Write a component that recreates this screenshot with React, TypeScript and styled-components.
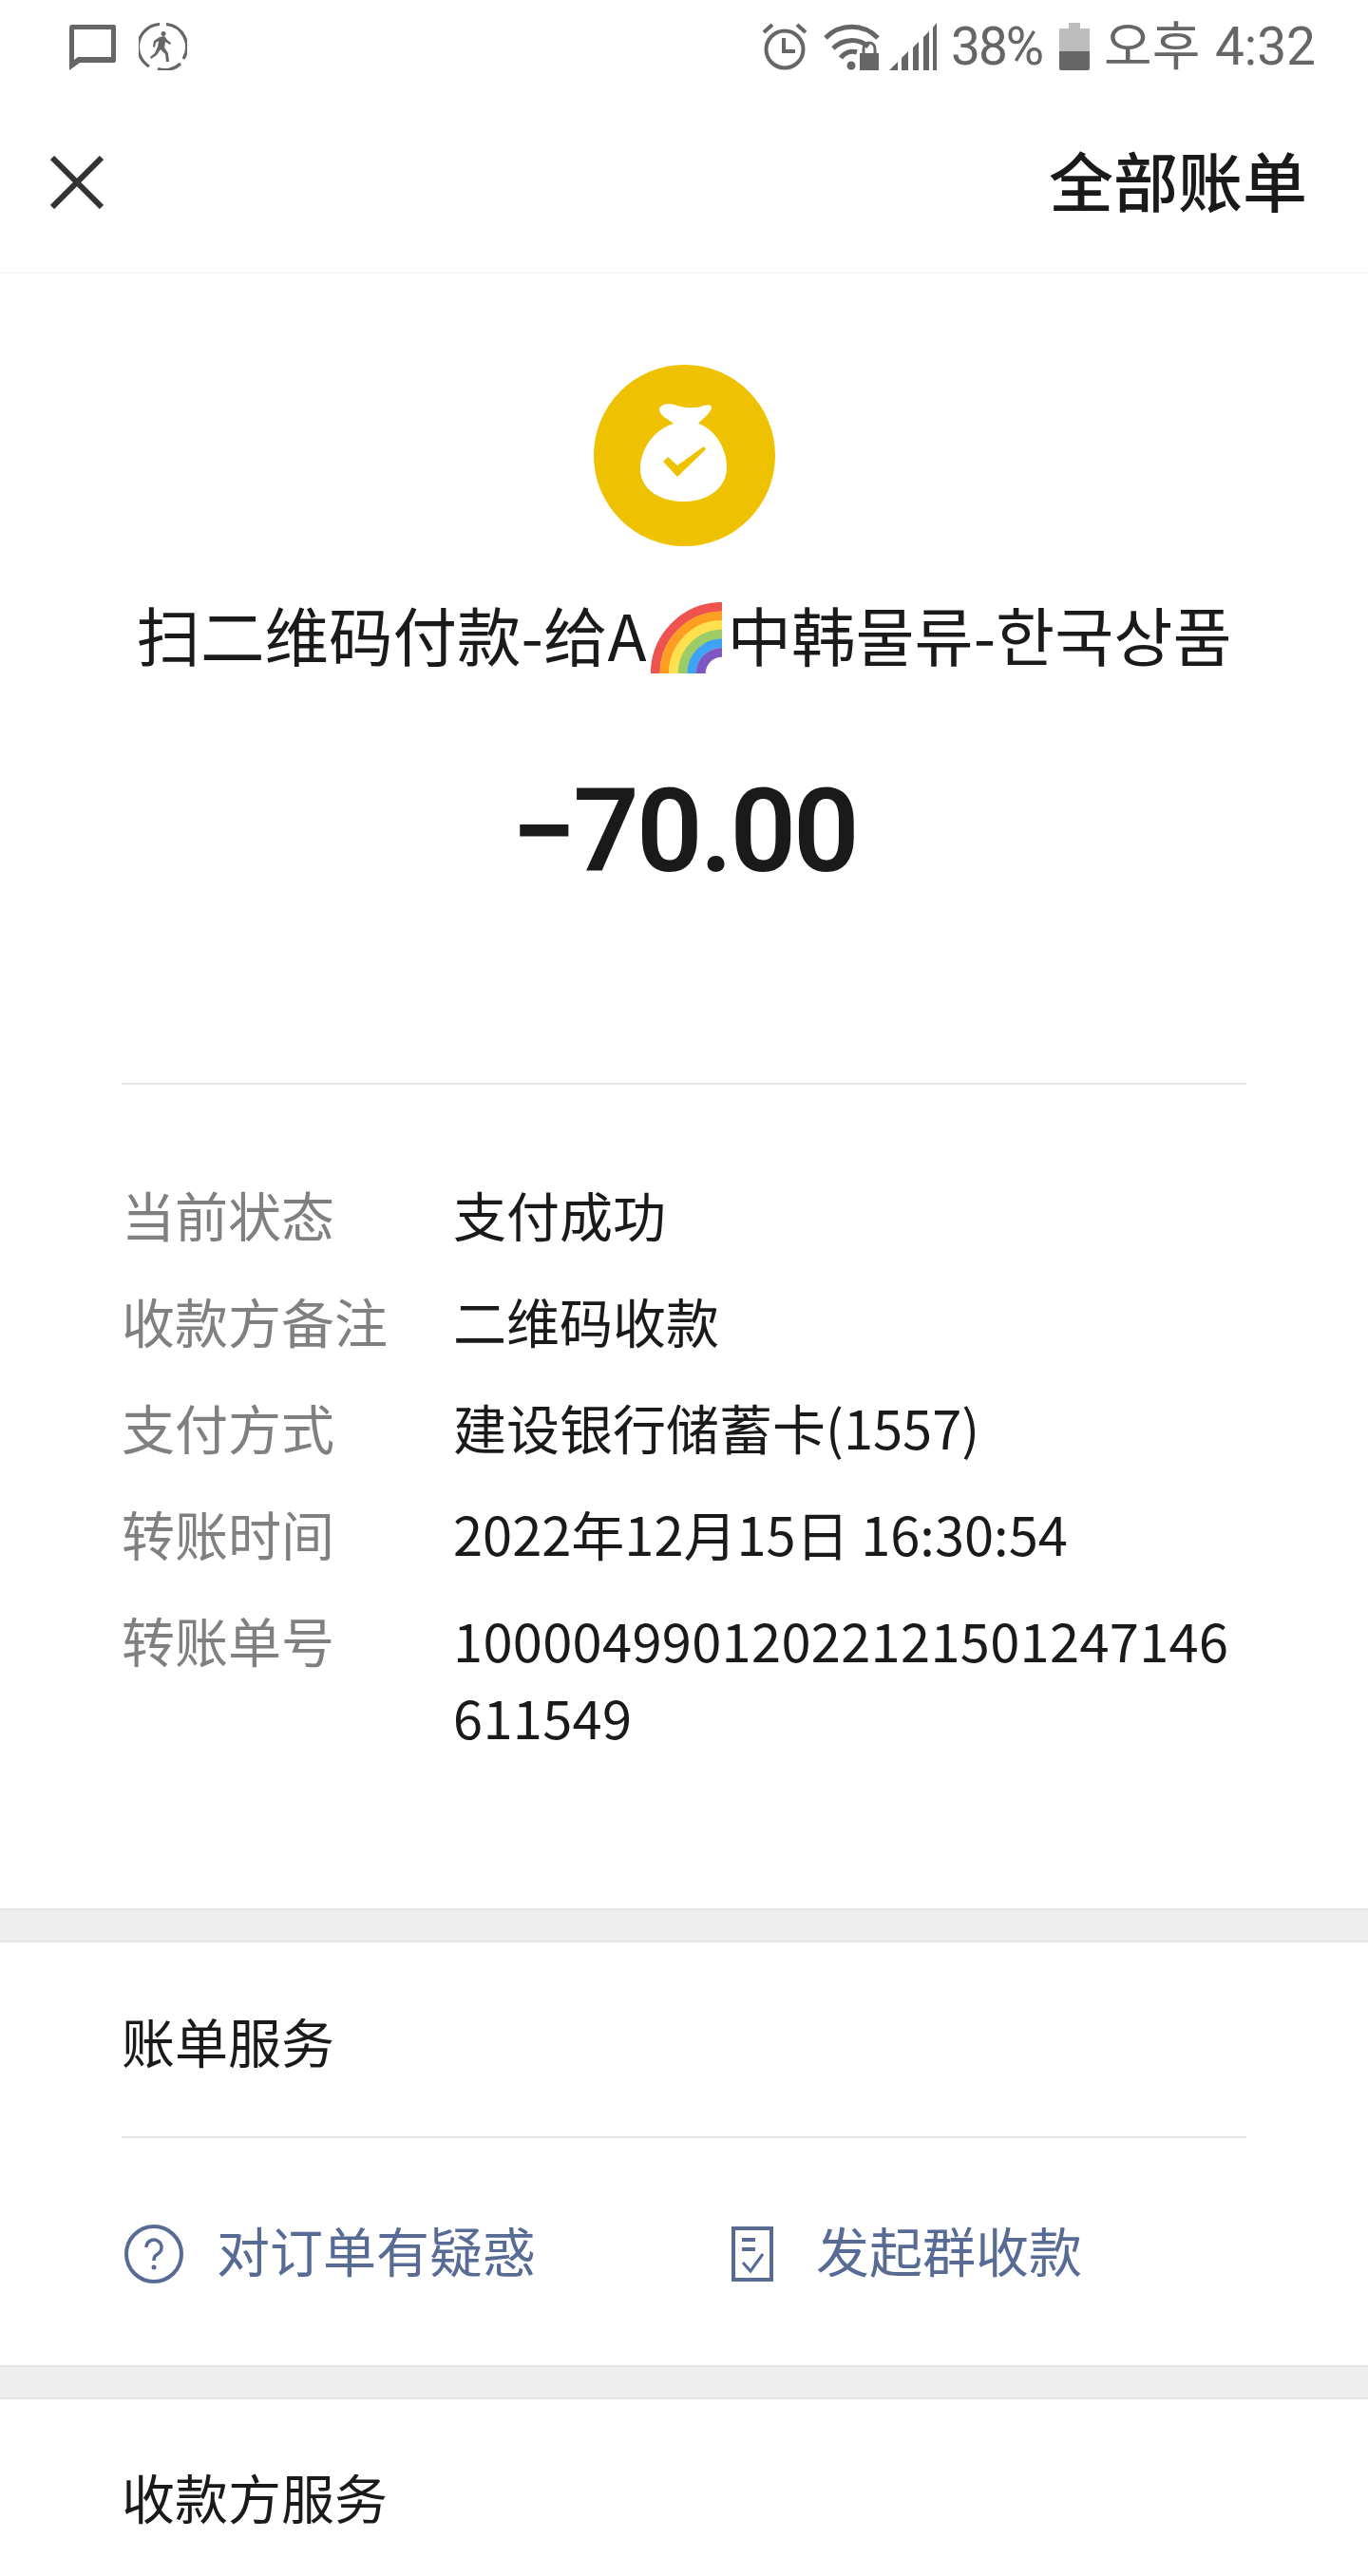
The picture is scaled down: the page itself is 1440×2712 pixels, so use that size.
import styled, { createGlobalStyle } from "styled-components"

const FONT_STACK = `"Noto Sans CJK SC", "Noto Sans CJK KR", Roboto, sans-serif`

const GlobalStyle = createGlobalStyle`
  html, body {
    margin: 0;
    padding: 0;
    background: #fff;
  }
  body {
    font-family: ${FONT_STACK};
  }
`

const Page = styled.div`
  width: 1440px;
  height: 2712px;
  overflow: hidden;
  background: #fff;
`

const StatusBar = styled.div`
  height: 98px;
  padding: 0 55px 0 73px;
  display: flex;
  align-items: center;
  justify-content: space-between;
  color: #666;
`

const StatusGroup = styled.div`
  display: flex;
  align-items: center;
`

const StatusIcon = styled.svg<{ $gap?: number }>`
  display: block;
  margin-left: ${props => props.$gap ?? 0}px;
`

const StatusText = styled.span<{ $gap?: number }>`
  margin-left: ${props => props.$gap ?? 0}px;
  font-family: Roboto, "Noto Sans CJK KR", sans-serif;
  font-size: 55px;
  line-height: 60px;
  letter-spacing: -2px;
  white-space: nowrap;
`

const ClockText = styled(StatusText)`
  letter-spacing: 0;
  word-spacing: 2px;
`

const NavBar = styled.div`
  height: 190px;
  padding: 0 64px 6px 53px;
  box-sizing: border-box;
  border-bottom: 2px solid #f6f6f6;
  display: flex;
  align-items: center;
  justify-content: space-between;
`

const NavTitle = styled.div`
  font-size: 68px;
  line-height: 80px;
  font-weight: 500;
  color: #1a1a1a;
`

const CloseIcon = styled.svg`
  margin-top: 6px;
`

const Hero = styled.div`
  padding-top: 96px;
  display: flex;
  flex-direction: column;
  align-items: center;
`

const PayTitle = styled.div`
  margin-top: 42px;
  display: flex;
  align-items: center;
  height: 100px;
  font-size: 67.5px;
  line-height: 100px;
  color: #1a1a1a;
  white-space: nowrap;
`

const RainbowIcon = styled.svg`
  margin: 8px 5px 0 5px;
`

const Amount = styled.div`
  margin-top: 89px;
  font-family: Roboto, sans-serif;
  font-size: 122px;
  line-height: 140px;
  font-weight: 600;
  letter-spacing: -3px;
  color: #1a1a1a;
`

const Inset = styled.div`
  margin: 0 128px;
`

const Rule = styled.div`
  height: 2px;
  background: #e5e5e5;
`

const HeroRule = styled(Rule)`
  margin-top: 194px;
`

const DetailList = styled.div`
  padding: 95px 0 162px;
  display: flex;
  flex-direction: column;
  gap: 31px;
`

const DetailRow = styled.div`
  display: flex;
  font-size: 56px;
  line-height: 81px;
`

const DetailLabel = styled.div`
  width: 349px;
  flex-shrink: 0;
  color: #808080;
`

const DetailValue = styled.div<{ $spacing?: number }>`
  flex: 1;
  min-width: 0;
  color: #1a1a1a;
  word-break: break-all;
  letter-spacing: ${props => props.$spacing ?? 0}px;
`

const SectionBand = styled.div`
  height: 36px;
  box-sizing: border-box;
  background: #eeeeee;
  border-top: 2px solid #e5e5e5;
  border-bottom: 2px solid #e5e5e5;
`

const SectionTitle = styled.div`
  height: 204px;
  display: flex;
  align-items: center;
  font-size: 56px;
  color: #1a1a1a;
`

const LinkRow = styled.div`
  height: 239px;
  padding-bottom: 6px;
  box-sizing: border-box;
  display: flex;
  align-items: center;
`

const ServiceLink = styled.div<{ $width: number }>`
  width: ${props => props.$width}px;
  display: flex;
  align-items: center;
  font-size: 56px;
  line-height: 80px;
  color: #576b95;
`

const LinkIconSlot = styled.div<{ $width: number }>`
  width: ${props => props.$width}px;
  flex-shrink: 0;
  padding: 10px 0 0 3px;
  box-sizing: border-box;
  display: flex;
  align-items: center;
`

const LastTitle = styled(SectionTitle)`
  height: 203px;
`

const details: { label: string; value: string; spacing?: number }[] = [
  { label: "当前状态", value: "支付成功" },
  { label: "收款方备注", value: "二维码收款" },
  { label: "支付方式", value: "建设银行储蓄卡(1557)" },
  { label: "转账时间", value: "2022年12月15日 16:30:54" },
  { label: "转账单号", value: "10000499012022121501247146611549", spacing: 0.32 },
]

const rainbowBands = ["#ef5350", "#ff9f22", "#ffe04f", "#9ccc65", "#3ea2f5", "#7e57c2"]

const Rainbow = () => (
  <RainbowIcon width={75} height={75} viewBox="0 0 75 75">
    {rainbowBands.map((color, i) => {
      const r = 70.2 - i * 9.6
      return (
        <path
          key={color}
          d={`M${75 - r} 75A${r} ${r} 0 0 1 75 ${75 - r}`}
          fill="none"
          stroke={color}
          strokeWidth={9.8}
        />
      )
    })}
  </RainbowIcon>
)

export default function App() {
  return (
    <Page>
      <GlobalStyle />
      <StatusBar>
        <StatusGroup>
          <StatusIcon width={50} height={50} viewBox="0 0 50 50">
            <path d="M3 2h44a2 2 0 0 1 2 2v36a2 2 0 0 1-2 2H11L0 50V5a3 3 0 0 1 3-3z M5 7v32l4-3h35V7z" fill="#666" fillRule="evenodd" />
          </StatusIcon>
          <StatusIcon $gap={23} width={51} height={50} viewBox="0 0 51 50">
            <path d="M22 1.500A24 24 0 0 0 11 46 M20 48.500A24 24 0 0 0 44 43 M47 38A24 24 0 0 0 29 1.500" fill="none" stroke="#666" strokeWidth={3.2} />
            <circle cx="26" cy="11.500" r="2.500" fill="#666" />
            <path d="M22 15l5-1 3 4 4 3-1 2-5-3-1 6 4 6 1 9h-3l-1-8-5-5-4 6-6 4-1-2 5-4 3-7 1-6-3 2-1 5-2-1 1-6z" fill="#666" />
          </StatusIcon>
        </StatusGroup>
        <StatusGroup>
          <StatusIcon width={46} height={50} viewBox="0 0 46 50">
            <circle cx="23" cy="28" r="19.500" fill="none" stroke="#666" strokeWidth={4} />
            <path d="M22 16v14h12" fill="none" stroke="#666" strokeWidth={4} />
            <path d="M1 10L10 2M45 10L36 2" fill="none" stroke="#666" strokeWidth={4} />
          </StatusIcon>
          <StatusIcon $gap={18} width={59} height={50} viewBox="0 0 59 50">
            <path d="M2 16A38 38 0 0 1 57 16" fill="none" stroke="#666" strokeWidth={5} />
            <path d="M10 27A27 27 0 0 1 47 25" fill="none" stroke="#666" strokeWidth={5} />
            <path d="M18 37A15 15 0 0 1 35 31" fill="none" stroke="#666" strokeWidth={5} />
            <circle cx="29" cy="45" r="4.500" fill="#666" />
            <rect x="38" y="32" width="20" height="18" fill="#666" />
            <path d="M42 33v-6a6 6 0 0 1 12 0v6" fill="none" stroke="#666" strokeWidth={3} />
          </StatusIcon>
          <StatusIcon $gap={10} width={50} height={50} viewBox="0 0 50 50">
            <path d="M0 50L9 41V50z M13 37L20 30V50H13z M25 26L31 20V50H25z M36 15L42 9V50H36z M46 5L50 0V50H46z" fill="#666" />
          </StatusIcon>
          <StatusText $gap={15}>38%</StatusText>
          <StatusIcon $gap={18} width={32} height={50} viewBox="0 0 32 50">
            <path d="M10 0h12v6h10v24H0V6h10z" fill="#bdbdbd" />
            <path d="M0 30h32v18a2 2 0 0 1-2 2H2a2 2 0 0 1-2-2z" fill="#666" />
          </StatusIcon>
          <ClockText $gap={15}>오후 4:32</ClockText>
        </StatusGroup>
      </StatusBar>

      <NavBar>
        <CloseIcon width={56} height={56} viewBox="0 0 56 56">
          <path d="M2 2L54 54M54 2L2 54" fill="none" stroke="#333" strokeWidth={6} />
        </CloseIcon>
        <NavTitle>全部账单</NavTitle>
      </NavBar>

      <Hero>
        <svg width={191} height={191} viewBox="0 0 191 191">
          <circle cx="95.500" cy="95.500" r="95.500" fill="#eec200" />
          <path
            d="M69 47C70 41 80 40 88 43C97 46 108 46 116 43C122 41 126 43 123 48C120 54 114 57 110 62C128 68 140 88 140 108C140 130 120 144 95 144C68 144 49 130 49 110C49 88 64 68 84 62C80 58 69 54 69 47z"
            fill="#fff"
          />
          <path d="M73 102L78 97L88 106L116 86L118 89L88 118z" fill="#eec200" />
        </svg>
        <PayTitle>
          扫二维码付款-给A
          <Rainbow />
          中韩물류-한국상품
        </PayTitle>
        <Amount>−70.00</Amount>
      </Hero>

      <Inset>
        <HeroRule />
        <DetailList>
          {details.map(({ label, value, spacing }) => (
            <DetailRow key={label}>
              <DetailLabel>{label}</DetailLabel>
              <DetailValue $spacing={spacing}>{value}</DetailValue>
            </DetailRow>
          ))}
        </DetailList>
      </Inset>

      <SectionBand />

      <Inset>
        <SectionTitle>账单服务</SectionTitle>
        <Rule />
        <LinkRow>
          <ServiceLink $width={639}>
            <LinkIconSlot $width={100}>
              <svg width={62} height={62} viewBox="0 0 62 62">
                <circle cx="31" cy="31" r="29" fill="none" stroke="#576b95" strokeWidth={4} />
                <path d="M23 24a8 8 0 1 1 12 7c-3 2-4 3-4 7" fill="none" stroke="#576b95" strokeWidth={3.500} />
                <circle cx="31" cy="45" r="2.500" fill="#576b95" />
              </svg>
            </LinkIconSlot>
            对订单有疑惑
          </ServiceLink>
          <ServiceLink $width={545}>
            <LinkIconSlot $width={92}>
              <svg width={44} height={58} viewBox="0 0 44 58">
                <path d="M2 2h40v54H2z" fill="none" stroke="#576b95" strokeWidth={4} />
                <path d="M11 14h14M11 24h14" fill="none" stroke="#576b95" strokeWidth={4} />
                <path d="M12 38l8 9 13-18" fill="none" stroke="#576b95" strokeWidth={3} />
              </svg>
            </LinkIconSlot>
            发起群收款
          </ServiceLink>
        </LinkRow>
      </Inset>

      <SectionBand />

      <Inset>
        <LastTitle>收款方服务</LastTitle>
      </Inset>
    </Page>
  )
}
